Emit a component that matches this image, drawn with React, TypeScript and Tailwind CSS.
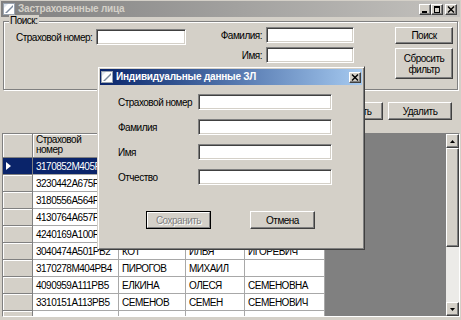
import React from "react";

const raised =
  "bg-[#d4d0c8] border border-t-white border-l-white border-r-[#404040] border-b-[#404040] shadow-[inset_-1px_-1px_0_#808080]";
const sunken =
  "bg-white border border-t-[#808080] border-l-[#808080] border-r-white border-b-white shadow-[inset_1px_1px_0_#404040,inset_-1px_-1px_0_#d4d0c8]";

function WinIcon() {
  return (
    <svg width="12" height="12" viewBox="0 0 12 12" className="shrink-0">
      <rect x="0.5" y="0.5" width="11" height="11" fill="#ffffff" stroke="#9aa4b0" />
      <path d="M2 10 L10 2 L10 4 L4 10 Z" fill="#7b8a9e" />
      <path d="M1 1 L5 1 L1 5 Z" fill="#dfe6ee" />
    </svg>
  );
}

function CapBtn({ kind }: { kind: "min" | "max" | "close" }) {
  return (
    <div className={`w-[12px] h-[11px] ${raised} flex items-center justify-center`}>
      <svg width="8" height="7" viewBox="0 0 8 7">
        {kind === "min" && <rect x="1" y="5" width="5" height="2" fill="#000" />}
        {kind === "max" && (
          <g fill="none" stroke="#000">
            <rect x="1.5" y="0.5" width="5" height="6" />
            <line x1="1" y1="1.5" x2="7" y2="1.5" />
          </g>
        )}
        {kind === "close" && (
          <g stroke="#000" strokeWidth="1.4">
            <line x1="1" y1="0.5" x2="7" y2="6.5" />
            <line x1="7" y1="0.5" x2="1" y2="6.5" />
          </g>
        )}
      </svg>
    </div>
  );
}

// Cells under the dialog are left empty (they are hidden in the reference)
const rows: [string, string, string, string][] = [
  ["3170852M405PB2", "", "", ""],
  ["3230442A675PB1", "", "", ""],
  ["3180556A564PB4", "", "", ""],
  ["4130764A657PB3", "", "", ""],
  ["4240169A100PB5", "", "", ""],
  ["3040474A501PB2", "КОТ", "ИЛЬЯ", "ИГОРЕВИЧ"],
  ["3170278M404PB4", "ПИРОГОВ", "МИХАИЛ", ""],
  ["4090959A111PB5", "ЕЛКИНА", "ОЛЕСЯ", "СЕМЕНОВНА"],
  ["3310151A113PB5", "СЕМЕНОВ", "СЕМЕН", "СЕМЕНОВИЧ"],
  ["", "", "", ""],
];

const widths = ["w-[86px]", "w-[67px]", "w-[59px]", "w-[80px]"];

export default function App() {
  return (
    <div className="w-[461px] h-[320px] bg-[#d4d0c8] relative overflow-hidden text-[10px] tracking-[-0.5px] whitespace-nowrap text-black font-['Liberation_Sans',Arial,sans-serif] flex flex-col">
      {/* Title bar */}
      <div className="h-[16px] mx-[1px] mt-[1px] flex items-center bg-linear-to-r from-[#808080] to-[#c4c2be] pl-[2px] pr-[3px] shrink-0">
        <WinIcon />
        <span className="ml-[3px] flex-1 font-bold text-[#d4d0c8] text-[10px] tracking-[-0.2px] leading-none">Застрахованные лица</span>
        <div className="flex items-center">
          <CapBtn kind="min" />
          <CapBtn kind="max" />
          <div className="w-[2px]" />
          <CapBtn kind="close" />
        </div>
      </div>

      {/* Group box */}
      <div className="relative mt-[4px] mx-[3px] h-[69px] border border-[#808080] shadow-[1px_1px_0_white,inset_1px_1px_0_white] shrink-0">
        <span className="absolute -top-[7px] left-[5px] px-[1px] bg-[#d4d0c8] leading-[12px]">Поиск:</span>
        <div className="flex items-start">
          <div className="mt-[7px] ml-[12px] flex items-center">
            <span className="w-[80px]">Страховой номер:</span>
            <div className={`w-[90px] h-[16px] ${sunken}`} />
          </div>
          <div className="mt-[5px] flex flex-col gap-[4px]">
            <div className="flex items-center">
              <span className="w-[80px] text-right pr-[4px]">Фамилия:</span>
              <div className={`w-[88px] h-[16px] ${sunken}`} />
            </div>
            <div className="flex items-center">
              <span className="w-[80px] text-right pr-[4px]">Имя:</span>
              <div className={`w-[88px] h-[16px] ${sunken}`} />
            </div>
          </div>
          <div className="ml-[41px] mt-[5px] flex flex-col gap-[4px]">
            <div className={`w-[58px] h-[17px] ${raised} flex items-center justify-center`}>Поиск</div>
            <div className={`w-[58px] h-[31px] ${raised} flex flex-col items-center justify-center text-center leading-[11px]`}>
              <span>Сбросить</span>
              <span>фильтр</span>
            </div>
          </div>
        </div>
      </div>

      {/* Action buttons */}
      <div className="mt-[12px] flex justify-end gap-[5px] pr-[9px] shrink-0">
        <div className={`w-[64px] h-[18px] ${raised}`} />
        <div className={`w-[64px] h-[18px] ${raised} flex items-center justify-center`}>Изменить</div>
        <div className={`w-[64px] h-[18px] ${raised} flex items-center justify-center`}>Удалить</div>
      </div>

      {/* Grid */}
      <div className="mt-[13px] ml-[2px] mr-[1px] h-[184px] shrink-0 flex border border-t-[#808080] border-l-[#808080] border-r-white border-b-white overflow-hidden">
        <div className="flex-1 bg-[#808080] overflow-hidden">
          <div className="flex h-[24px]">
            <div className="w-[30px] h-full bg-[#d4d0c8] border-r border-b border-[#808080] shadow-[inset_1px_1px_0_white]" />
            {widths.map((w, i) => (
              <div
                key={i}
                className={`${w} h-full bg-[#d4d0c8] border-r border-b border-[#808080] shadow-[inset_1px_1px_0_white] pl-[3px] pt-[1px] leading-[10px] flex flex-col`}
              >
                {i === 0 && (
                  <>
                    <span>Страховой</span>
                    <span>номер</span>
                  </>
                )}
              </div>
            ))}
          </div>
          {rows.map((r, ri) => {
            const sel = ri === 0;
            return (
              <div key={ri} className="flex h-[17px]">
                <div
                  className={`w-[30px] h-full border-r border-b border-[#808080] flex items-center pl-[3px] ${
                    sel ? "bg-[#0a246a]" : "bg-[#d4d0c8] shadow-[inset_1px_1px_0_white]"
                  }`}
                >
                  {sel && (
                    <svg width="5" height="8" viewBox="0 0 5 8">
                      <path d="M0 0 L5 4 L0 8 Z" fill="#ffffff" />
                    </svg>
                  )}
                </div>
                {r.map((c, ci) => (
                  <div
                    key={ci}
                    className={`${widths[ci]} h-full border-r border-b border-[#a8a8a8] pl-[3px] flex items-center overflow-hidden ${
                      sel && ci === 0 ? "bg-[#0a246a] text-white" : "bg-white"
                    }`}
                  >
                    {c}
                  </div>
                ))}
              </div>
            );
          })}
        </div>
        {/* Scrollbar */}
        <div className="w-[13px] h-full flex flex-col bg-[#ecebe8]">
          <div className={`h-[14px] ${raised} flex items-center justify-center shrink-0`}>
            <svg width="5" height="3" viewBox="0 0 5 3">
              <path d="M0 3 L2.5 0 L5 3 Z" fill="#000" />
            </svg>
          </div>
          <div className={`h-[99px] ${raised} shrink-0`} />
          <div className="flex-1" />
          <div className={`h-[14px] ${raised} flex items-center justify-center shrink-0`}>
            <svg width="5" height="3" viewBox="0 0 5 3">
              <path d="M0 0 L2.5 3 L5 0 Z" fill="#000" />
            </svg>
          </div>
        </div>
      </div>

      {/* Dialog */}
      <div className="absolute left-[97px] top-[66px] w-[268px] h-[184px] bg-[#d4d0c8] border border-t-[#d4d0c8] border-l-[#d4d0c8] border-r-[#404040] border-b-[#404040] shadow-[inset_1px_1px_0_white,inset_-1px_-1px_0_#808080] p-[2px] flex flex-col">
        <div className="h-[16px] flex items-center bg-linear-to-r from-[#0a246a] to-[#a6caf0] pl-[1px] pr-[1px] shrink-0">
          <WinIcon />
          <span className="ml-[3px] flex-1 font-bold text-white text-[10px] tracking-[-0.2px] leading-none">Индивидуальные данные ЗЛ</span>
          <CapBtn kind="close" />
        </div>
        <div className="mt-[9px] pl-[18px] flex flex-col gap-[9px]">
          {["Страховой номер", "Фамилия", "Имя", "Отчество"].map((l) => (
            <div key={l} className="flex items-center h-[16px]">
              <span className="w-[80px]">{l}</span>
              <div className={`w-[134px] h-[16px] ${sunken}`} />
            </div>
          ))}
        </div>
        <div className="mt-[26px] ml-[46px] flex gap-[39px]">
          <div className="w-[65px] h-[18px] border border-black">
            <div className="w-full h-full bg-[#d4d0c8] border border-t-white border-l-white border-r-[#808080] border-b-[#808080] flex items-center justify-center text-[#808080] [text-shadow:1px_1px_0_white]">
              Сохранить
            </div>
          </div>
          <div className={`w-[65px] h-[18px] ${raised} flex items-center justify-center`}>Отмена</div>
        </div>
      </div>
    </div>
  );
}
